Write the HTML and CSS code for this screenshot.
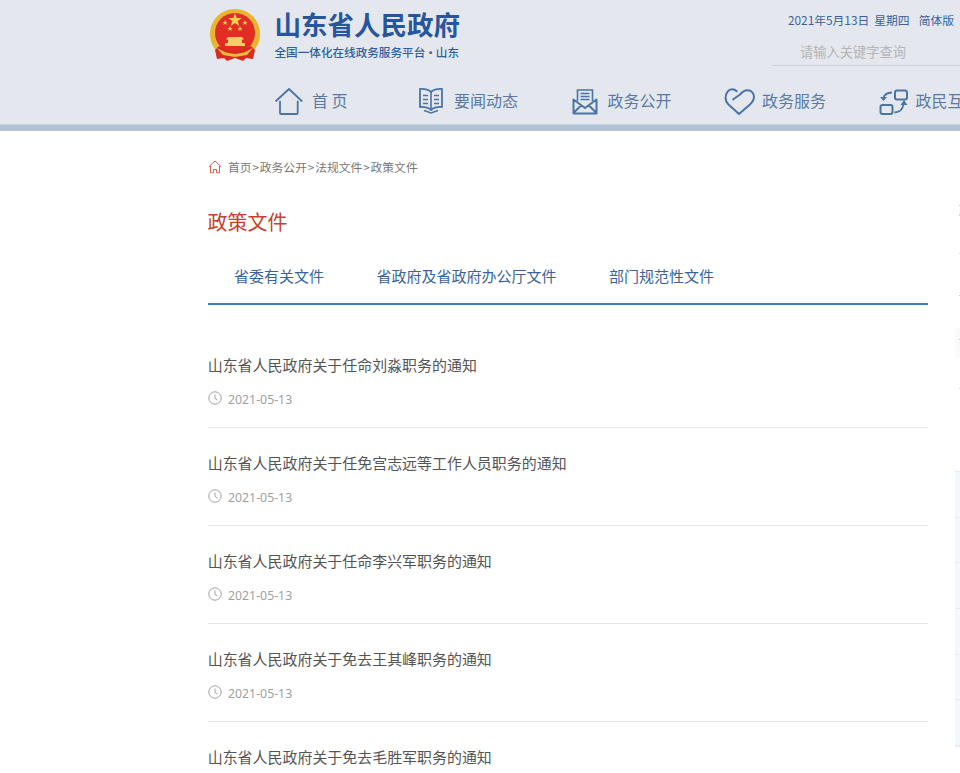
FILE: index.html
```html
<!DOCTYPE html>
<html lang="zh-CN">
<head>
<meta charset="utf-8">
<title>政策文件</title>
<link rel="stylesheet" href="styles.css">
</head>
<body>
<header class="site-header">
  <div class="top-row">
    <div class="brand">
      <svg class="emblem" viewBox="0 0 52 56" width="52" height="56">
        <path d="M9 46C3 41 1 34 1 28 1 14 12 3 26 3s25 11 25 25c0 6-2 13-8 18z" fill="#e8b530"/>
        <circle cx="26" cy="27" r="20" fill="#e22c26"/>
        <path d="M26 7l1.700 5h5.200l-4.200 3.100 1.600 5-4.300-3.100-4.300 3.100 1.600-5-4.200-3.100h5.200z" fill="#f6d24a"/>
        <path d="M16 14l.7 1.900h2l-1.600 1.200.6 1.900-1.700-1.200-1.700 1.200.6-1.900-1.600-1.200h2zM36 14l.7 1.900h2l-1.600 1.200.6 1.900-1.700-1.200-1.700 1.200.6-1.900-1.600-1.200h2zM21 20l.7 1.900h2l-1.600 1.200.6 1.900-1.700-1.200-1.700 1.200.6-1.900-1.600-1.200h2zM31 20l.7 1.900h2l-1.600 1.200.6 1.900-1.700-1.200-1.700 1.200.6-1.900-1.600-1.200h2z" fill="#f6d24a"/>
        <path d="M19 31h14l2 2.500h-2V37h3v3H16v-3h3v-3.500h-2z" fill="#f3cf66"/>
        <path d="M10 40l8 4 8 1.500 8-1.500 8-4 4 4-2 9-7-1-3 3-8-3-8 3-3-3-7 1-2-9z" fill="#d92a22"/>
        <path d="M8 42l9 4.500 9 1.500 9-1.500 9-4.500-6 7-12 2-12-2z" fill="#ecbb38"/>
      </svg>
      <div class="brand-text">
        <div class="brand-name">山东省人民政府</div>
        <div class="brand-sub">全国一体化在线政务服务平台<span class="brand-dot">·</span>山东</div>
      </div>
    </div>
    <div class="top-tools">
      <div class="date-line"><span>2021年5月13日</span><span class="week">星期四</span><span class="lang">简体版</span></div>
      <div class="search">请输入关键字查询</div>
    </div>
  </div>
  <nav class="main-nav">
    <a class="nav-item nav-first">
      <svg class="nav-icon" viewBox="0 0 28 28" width="28" height="28"><path d="M1 14 14 2l12.700 12M5 14.500v11.500q0 1 1 1h15.700q1 0 1-1V14.500" fill="none" stroke="#4a74a4" stroke-width="1.800" stroke-linecap="round" stroke-linejoin="round"/></svg>
      <span>首 页</span>
    </a>
    <a class="nav-item">
      <svg class="nav-icon" viewBox="0 0 28 28" width="28" height="28"><path d="M2 2q7-.5 11 3 4-3.500 11-3v18q-7-.5-11 3-4-3.500-11-3z" fill="none" stroke="#4a74a4" stroke-width="1.800" stroke-linejoin="round"/><path d="M13 5v18M5 8.500h5M5 12.500h5M5 16.500h5M16 8.500h5M16 12.500h5M16 16.500h5" stroke="#4a74a4" stroke-width="1.600"/><path d="M6 23.500l7 2.500 7-2.500" fill="none" stroke="#4a74a4" stroke-width="1.500"/></svg>
      <span>要闻动态</span>
    </a>
    <a class="nav-item">
      <svg class="nav-icon" viewBox="0 0 28 28" width="28" height="28"><path d="M1.500 12.500l11.500 8.500 11.500-8.500v14H1.500zM1.500 26l7.500-7.500M24.500 26l-7.500-7.500" fill="none" stroke="#4a74a4" stroke-width="2" stroke-linejoin="round"/><path d="M5.500 14V3h15v11" fill="none" stroke="#4a74a4" stroke-width="1.600"/><path d="M8.500 6.500h9M8.500 9.500h9M8.500 12.500h9" stroke="#4a74a4" stroke-width="1.400"/></svg>
      <span>政务公开</span>
    </a>
    <a class="nav-item nav-wide">
      <svg class="nav-icon" viewBox="0 0 28 28" width="28" height="28" overflow="visible"><path d="M8 12.500L15 7.500C18 4 20.500 3 23 3.300C27 3.700 29 7 29 10C29 13 27.500 15 25 17.500L14 27L3.500 17.500C1 15 .5 13 .5 11C.5 6 3.500 2.300 7 2.300C9 2.300 10.500 3 11.700 4.300" fill="none" stroke="#4a74a4" stroke-width="2" stroke-linecap="round" stroke-linejoin="round"/></svg>
      <span>政务服务</span>
    </a>
    <a class="nav-item nav-wide">
      <svg class="nav-icon" viewBox="0 0 28 28" width="28" height="28" overflow="visible"><rect x="16" y="3.500" width="12" height="9" rx="2" fill="none" stroke="#4a74a4" stroke-width="2"/><rect x="1.500" y="18" width="12" height="9" rx="2" fill="none" stroke="#4a74a4" stroke-width="2"/><path d="M13 5.500Q5.500 6 4.500 11M15.500 25.500Q23.500 25 24.500 17" fill="none" stroke="#4a74a4" stroke-width="1.800"/><path d="M1 10h7l-3.500 4zM21.500 18h7l-3.500-5z" fill="#4a74a4"/></svg>
      <span>政民互动</span>
    </a>
  </nav>
</header>
<div class="header-bar"></div>
<div class="page">
  <main class="content">
    <div class="crumbs">
      <svg class="crumb-icon" viewBox="0 0 14 14" width="14" height="14"><path d="M.8 6.800 7 1l6.200 5.800M2.500 6v6.800h3V9.500h3v3.300h3V6" fill="none" stroke="#d8604f" stroke-width="1"/></svg>
      <span>首页</span><span class="sep">&gt;</span><span>政务公开</span><span class="sep">&gt;</span><span>法规文件</span><span class="sep">&gt;</span><span>政策文件</span>
    </div>
    <h1 class="page-title">政策文件</h1>
    <div class="tabs">
      <a class="tab">省委有关文件</a>
      <a class="tab">省政府及省政府办公厅文件</a>
      <a class="tab">部门规范性文件</a>
    </div>
    <ul class="doc-list">
      <li class="doc"><a class="doc-title">山东省人民政府关于任命刘淼职务的通知</a><div class="doc-date"><svg class="clock" viewBox="0 0 14 14" width="14" height="14"><circle cx="7" cy="7" r="6.200" fill="none" stroke="#a0a0a0"/><path d="M7 3.500V7.500l2.500 1.500" fill="none" stroke="#a0a0a0"/></svg><span>2021-05-13</span></div></li>
      <li class="doc"><a class="doc-title">山东省人民政府关于任免宫志远等工作人员职务的通知</a><div class="doc-date"><svg class="clock" viewBox="0 0 14 14" width="14" height="14"><circle cx="7" cy="7" r="6.200" fill="none" stroke="#a0a0a0"/><path d="M7 3.500V7.500l2.500 1.500" fill="none" stroke="#a0a0a0"/></svg><span>2021-05-13</span></div></li>
      <li class="doc"><a class="doc-title">山东省人民政府关于任命李兴军职务的通知</a><div class="doc-date"><svg class="clock" viewBox="0 0 14 14" width="14" height="14"><circle cx="7" cy="7" r="6.200" fill="none" stroke="#a0a0a0"/><path d="M7 3.500V7.500l2.500 1.500" fill="none" stroke="#a0a0a0"/></svg><span>2021-05-13</span></div></li>
      <li class="doc"><a class="doc-title">山东省人民政府关于免去王其峰职务的通知</a><div class="doc-date"><svg class="clock" viewBox="0 0 14 14" width="14" height="14"><circle cx="7" cy="7" r="6.200" fill="none" stroke="#a0a0a0"/><path d="M7 3.500V7.500l2.500 1.500" fill="none" stroke="#a0a0a0"/></svg><span>2021-05-13</span></div></li>
      <li class="doc"><a class="doc-title">山东省人民政府关于免去毛胜军职务的通知</a></li>
    </ul>
  </main>
  <aside class="side">
    <div class="side-links">
      <div class="side-link">政</div>
      <div class="side-link">省</div>
      <div class="side-link">部</div>
      <div class="side-link side-link-hi">市</div>
      <div class="side-link">县</div>
    </div>
    <div class="side-panel">
      <div class="side-row"></div><div class="side-row"></div><div class="side-row"></div><div class="side-row"></div><div class="side-row"></div><div class="side-row"></div>
    </div>
    <div class="side-red"></div>
  </aside>
</div>
</body>
</html>
```
FILE: styles.css
```css
* { box-sizing: border-box; }
html, body { margin: 0; padding: 0; height: 773px; overflow: hidden; background: #fff; }
body { font-family: "Microsoft YaHei", "Noto Sans CJK SC", sans-serif; width: 960px; }
a { color: inherit; text-decoration: none; }
ul { list-style: none; margin: 0; padding: 0; }

.site-header { height: 124px; background: #e4e8ee; overflow: hidden; }
.top-row { display: flex; height: 72px; padding-left: 209px; }
.brand { display: flex; padding-top: 6px; width: 563px; }
.emblem { flex: none; }
.brand-text { margin-left: 13.5px; }
.brand-name { font-size: 26.5px; line-height: 36px; font-weight: 700; color: #27569c; white-space: nowrap; }
.brand-sub { font-size: 11.6px; line-height: 16px; font-weight: 500; color: #2f5f9f; white-space: nowrap; margin-top: 2px; }
.brand-dot { margin: 0 -.5px; }
.top-tools { width: 188px; }
.date-line { display: flex; padding-left: 16px; margin-top: 12px; line-height: 16px; font-size: 11.8px; color: #3a6299; white-space: nowrap; }
.week { margin-left: 5px; }
.lang { margin-left: 9px; }
.search { margin-top: 12px; height: 26px; line-height: 24px; padding-left: 28px; font-size: 13.25px; color: #b4b4b4; border-bottom: 1px solid #ccd3dc; white-space: nowrap; }

.main-nav { display: flex; height: 52px; padding-left: 275px; color: #5a7aa5; font-size: 16px; white-space: nowrap; }
.nav-item { display: flex; align-items: flex-start; flex: none; width: 153.5px; padding-top: 15px; line-height: 26px; }
.nav-first { width: 143px; }
.nav-icon { flex: none; margin-right: 8px; }
.nav-first .nav-icon, .nav-wide .nav-icon { margin-right: 9px; }

.header-bar { height: 7px; background: #b3c3d5; border-top: 1px solid #c8d2de; }

.page { display: flex; height: 642px; padding-left: 208px; overflow: hidden; }
.content { width: 720px; flex: none; }
.crumbs { display: flex; align-items: center; margin-top: 28px; height: 16px; font-size: 11.8px; line-height: 16px; color: #777; white-space: nowrap; }
.crumb-icon { margin-right: 6px; flex: none; }
.sep { margin: 0 .8px; }
.page-title { margin: 32px 0 0 -.5px; font-size: 20px; line-height: 30px; font-weight: 400; color: #c9402e; }
.tabs { display: flex; height: 56px; margin-top: 12px; padding-left: 26px; gap: 52.5px; border-bottom: 2px solid #3f7cc4; font-size: 15px; line-height: 24px; color: #3a639b; }
.tab { padding-top: 15px; }
.doc-list { margin-top: 25px; }
.doc { height: 98px; padding-top: 23px; border-bottom: 1px solid #e8e8e8; }
.doc-title { display: block; margin-left: -.3px; font-size: 14.96px; line-height: 24px; color: #555; white-space: nowrap; }
.doc-date { display: flex; align-items: center; margin-top: 12px; height: 20px; font-family: "Noto Sans", sans-serif; font-size: 12.3px; color: #a0a0a0; }
.clock { margin-right: 6px; flex: none; margin-top: -2px; }

.side { width: 32px; margin-left: 27px; flex: none; position: relative; }
.side-links { padding-top: 70px; padding-left: 4px; font-size: 13px; color: #777; }
.side-link { height: 43px; line-height: 18px; white-space: nowrap; }
.side-link-hi { height: 30px; margin: -2px 0 19px -4px; padding: 6px 0 0 4px; background: #fafafa; }
.side-panel { margin-top: 51px; background: #f3f8fd; border-bottom: 2px solid #e6ebf0; }
.side-row { height: 45.7px; border-top: 1px solid #e6ebf0; }
.side-red { height: 12px; margin-top: 26px; background: #d9533f; }
```
